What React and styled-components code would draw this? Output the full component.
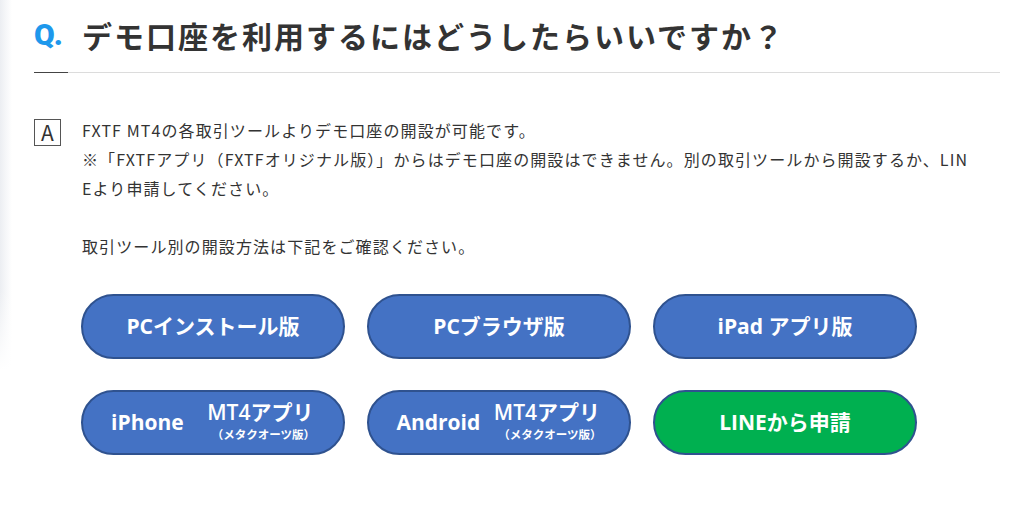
import styled, { createGlobalStyle } from "styled-components";

const GlobalStyle = createGlobalStyle`
  html, body {
    margin: 0;
    padding: 0;
    background-color: #fff;
  }
  body {
    font-family: "Noto Sans CJK JP", "Noto Sans", sans-serif;
    color: #333;
    background-image:
      linear-gradient(to bottom, rgba(255, 255, 255, 0) 290px, #fff 370px),
      linear-gradient(to right, #eceef2 0, #f6f7f9 6px, #fff 12px);
    background-size: 12px 370px, 12px 370px;
    background-repeat: no-repeat;
  }
`;

const Page = styled.div`
  width: 1024px;
  height: 507px;
  box-sizing: border-box;
  padding: 16px 24px 0 34px;
`;

const Question = styled.h2`
  display: flex;
  align-items: center;
  gap: 21px;
  margin: 0;
  padding: 0 0 18px;
  border-bottom: 1px solid;
  border-image: linear-gradient(to right, #444 0, #444 35px, #dcdcdc 35px) 1;
`;

const QMark = styled.span`
  width: 27px;
  font-family: Roboto, "Liberation Sans", sans-serif;
  font-weight: 900;
  font-size: 30px;
  line-height: 38px;
  color: #1e98ec;
  letter-spacing: -1px;
`;

const QText = styled.span`
  font-size: 30px;
  font-weight: 700;
  line-height: 38px;
  letter-spacing: 2px;
  color: #333;
`;

const Answer = styled.div`
  display: flex;
  align-items: flex-start;
  gap: 21px;
  margin-top: 43px;
`;

const AMark = styled.span`
  flex: none;
  display: flex;
  align-items: center;
  justify-content: center;
  width: 25px;
  height: 25px;
  margin-top: 3px;
  border: 1px solid #555;
  font-family: "Noto Sans CJK JP", sans-serif;
  font-size: 21px;
  line-height: 1;
  color: #333;
`;

const Body = styled.div`
  flex: 1;
  padding-right: 26px;
`;

const Text = styled.p`
  margin: 0;
  font-size: 16px;
  line-height: 29px;
  letter-spacing: 1.1px;
  color: #333;
  word-break: break-all;
`;

const Blank = styled.div`
  height: 29px;
`;

const Buttons = styled.div`
  display: grid;
  grid-template-columns: repeat(3, 264px);
  column-gap: 22px;
  row-gap: 31px;
  margin-top: 33px;
  margin-left: -1px;
`;

const Pill = styled.a`
  display: flex;
  align-items: center;
  justify-content: center;
  gap: ${(p) => p.$gap || 0}px;
  height: 65px;
  box-sizing: border-box;
  padding-bottom: 4px;
  border: 2px solid #2f528f;
  border-radius: 33px;
  background-color: ${(p) => (p.$green ? "#00b050" : "#4472c4")};
  color: #fff;
  text-decoration: none;
  font-family: "Open Sans", "Noto Sans CJK JP", sans-serif;
  font-weight: 700;
  font-size: 21px;
  white-space: nowrap;
`;

const Device = styled.span`
  font-size: 21px;
  margin-top: 3px;
`;

const AppStack = styled.span`
  display: flex;
  flex-direction: column;
  align-items: center;
`;

const AppName = styled.span`
  font-size: 21px;
  font-weight: 600;
  line-height: 29px;
`;

const AppNote = styled.span`
  font-size: 11.5px;
  line-height: 16px;
  padding-left: 6px;
`;

const buttons = [
  { label: "PCインストール版" },
  { label: "PCブラウザ版" },
  { label: "iPad アプリ版" },
  { device: "iPhone", gap: 22 },
  { device: "Android", gap: 12 },
  { label: "LINEから申請", green: true },
];

function App() {
  return (
    <>
      <GlobalStyle />
      <Page>
        <Question>
          <QMark>Q.</QMark>
          <QText>デモ口座を利用するにはどうしたらいいですか？</QText>
        </Question>
        <Answer>
          <AMark>A</AMark>
          <Body>
            <Text>FXTF MT4の各取引ツールよりデモ口座の開設が可能です。</Text>
            <Text>
              ※「FXTFアプリ（FXTFオリジナル版）」からはデモ口座の開設はできません。別の取引ツールから開設するか、LINEより申請してください。
            </Text>
            <Blank />
            <Text>取引ツール別の開設方法は下記をご確認ください。</Text>
            <Buttons>
              {buttons.map((b, i) =>
                b.device ? (
                  <Pill href="#" key={i} $gap={b.gap}>
                    <Device>{b.device}</Device>
                    <AppStack>
                      <AppName>MT4アプリ</AppName>
                      <AppNote>（メタクオーツ版）</AppNote>
                    </AppStack>
                  </Pill>
                ) : (
                  <Pill href="#" key={i} $green={b.green}>
                    {b.label}
                  </Pill>
                )
              )}
            </Buttons>
          </Body>
        </Answer>
      </Page>
    </>
  );
}

export default App;
